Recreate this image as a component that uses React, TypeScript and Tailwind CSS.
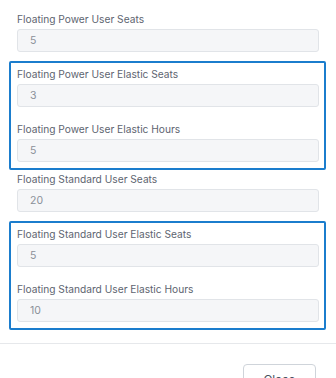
import React from "react";

interface Field {
  label: string;
  value: string;
}

function FieldRow({ field, last }: { field: Field; last?: boolean }) {
  return (
    <div className={last ? "" : "mb-[14px]"}>
      <label className="block text-[10.2px] leading-[16px] text-[#5d6470] mb-[2px]">{field.label}</label>
      <input
        readOnly
        value={field.value}
        className="block w-full h-[23px] px-[12px] rounded-[3px] border border-[#e1e4e8] bg-[#f5f6f8] text-[10.5px] text-[#8a9099] outline-none"
      />
    </div>
  );
}

function Group({ fields }: { fields: Field[] }) {
  return (
    <div className="-mt-[5px] mb-[1px] -ml-[8px] -mr-[7px] pl-[6px] pr-[5px] pt-[3px] pb-[6px] border-2 border-[#1b7dcd] rounded-[2px]">
      {fields.map((f, i) => (
        <FieldRow key={f.label} field={f} last={i === fields.length - 1} />
      ))}
    </div>
  );
}

export default function App() {
  return (
    <div className="w-[336px] h-[378px] overflow-hidden bg-white" style={{ fontFamily: "Inter, 'Noto Sans', sans-serif" }}>
      <div className="px-[17px] pt-[11px] pb-[12px]">
        <FieldRow field={{ label: "Floating Power User Seats", value: "5" }} />
        <Group
          fields={[
            { label: "Floating Power User Elastic Seats", value: "3" },
            { label: "Floating Power User Elastic Hours", value: "5" },
          ]}
        />
        <FieldRow field={{ label: "Floating Standard User Seats", value: "20" }} />
        <Group
          fields={[
            { label: "Floating Standard User Elastic Seats", value: "5" },
            { label: "Floating Standard User Elastic Hours", value: "10" },
          ]}
        />
      </div>
      <div className="border-t border-[#e6e8eb] flex justify-end pt-[20px] pr-[20px]">
        <button className="w-[73px] h-[32px] rounded-[4px] border border-[#cfd4da] bg-white text-[12px] text-[#4a5260]">
          Close
        </button>
      </div>
    </div>
  );
}
